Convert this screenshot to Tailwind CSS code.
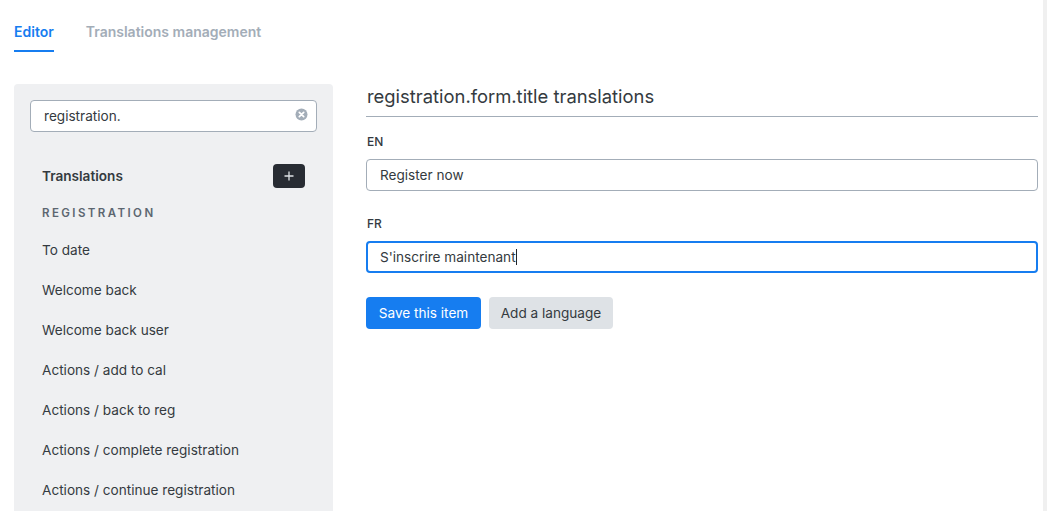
<!DOCTYPE html>
<html lang="en">
  <head>
    <meta charset="UTF-8" />
    <title>Translations editor</title>
    <script src="https://cdn.jsdelivr.net/npm/@tailwindcss/browser@4"></script>
  </head>
  <body class="h-[511px] overflow-hidden bg-white font-['Inter',sans-serif] text-[#212529]">
    <div class="flex h-full">
      <div class="flex-1 min-w-0 pl-[14px] pr-[5px]">
        <!-- Tabs -->
        <div class="flex gap-8 pt-[22px] h-[84px] text-[14px] font-semibold leading-5">
          <a class="h-[30px] border-b-2 border-[#167df0] text-[#167df0]">Editor</a>
          <a class="text-[#a3adb8]">Translations management</a>
        </div>

        <div class="flex gap-[33px]">
          <!-- Sidebar -->
          <aside class="w-[319px] h-[427px] shrink-0 bg-[#eff0f2] rounded-t-[4px] pt-4 px-4">
            <div class="flex items-center justify-between h-8 rounded-[4px] border border-[#a3adb8] bg-white pl-[13px] pr-[8px] text-[13.6px]">
              <span class="text-[#343a40]">registration.</span>
              <svg class="w-[13px] h-[13px] -mt-[3px]" viewBox="0 0 13 13">
                <circle cx="6.5" cy="6.5" r="6" fill="#a3adb8" />
                <path d="M4.3 4.3l4.4 4.4M8.7 4.3l-4.4 4.4" stroke="#fff" stroke-width="1.7" stroke-linecap="round" />
              </svg>
            </div>
            <div class="flex items-center justify-between pl-3 pr-3 mt-8 h-6">
              <span class="text-[13.6px] font-semibold text-[#343a40]">Translations</span>
              <button class="flex items-center justify-center w-8 h-6 rounded-[4px] bg-[#282c33]">
                <svg class="w-[10px] h-[10px]" viewBox="0 0 10 10">
                  <path d="M5 .5v9M.5 5h9" stroke="#dee2e6" stroke-width="1.3" />
                </svg>
              </button>
            </div>
            <h3 class="pl-3 mt-[17px] text-[11.5px] leading-[17px] font-semibold tracking-[0.21em] text-[#5c6670]">REGISTRATION</h3>
            <ul class="pl-3 mt-[8px] text-[13.6px] leading-10 text-[#343a40]">
              <li>To date</li>
              <li>Welcome back</li>
              <li>Welcome back user</li>
              <li>Actions / add to cal</li>
              <li>Actions / back to reg</li>
              <li>Actions / complete registration</li>
              <li>Actions / continue registration</li>
            </ul>
          </aside>

          <!-- Form -->
          <main class="flex-1 min-w-0">
            <h2 class="h-[33px] border-b border-[#a3adb8] pl-px text-[18.4px] leading-[25px] text-[#343a40]">registration.form.title translations</h2>
            <label class="block mt-[16px] pl-px text-[12px] leading-[18px] font-medium text-[#343a40]">EN</label>
            <div class="flex items-center mt-2 h-8 rounded-[4px] border border-[#a3adb8] pl-[13px] text-[13.6px] text-[#343a40]">Register now</div>
            <label class="block mt-[24px] pl-px text-[12px] leading-[18px] font-medium text-[#343a40]">FR</label>
            <div class="flex items-center mt-2 h-8 rounded-[4px] border-2 border-[#167df0] pl-3 text-[13.6px] text-[#343a40]">
              S'inscrire maintenant<span class="w-px h-[16px] bg-[#212529]"></span>
            </div>
            <div class="flex gap-2 mt-6">
              <button class="h-8 w-[115px] rounded-[4px] bg-[#167df0] text-[13.6px] text-white">Save this item</button>
              <button class="h-8 w-[124px] rounded-[4px] bg-[#dee2e6] text-[13.6px] text-[#343a40]">Add a language</button>
            </div>
          </main>
        </div>
      </div>
      <!-- Scrollbar track -->
      <div class="w-[4px] shrink-0 bg-[#f0f0f0]"></div>
    </div>
  </body>
</html>
